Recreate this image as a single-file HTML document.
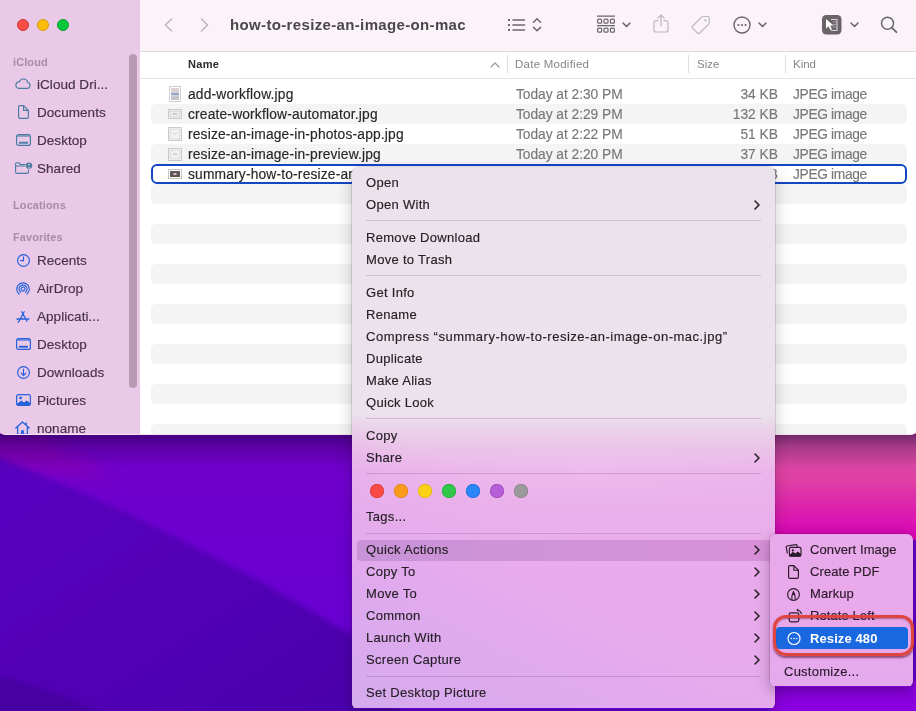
<!DOCTYPE html><html><head><meta charset="utf-8"><style>

*{margin:0;padding:0;box-sizing:border-box}
html,body{width:916px;height:711px;overflow:hidden}
body{position:relative;font-family:"Liberation Sans",sans-serif;background:#5a00b8}
#win,#menu,#sub,#wall{will-change:transform}
.abs{position:absolute}
svg{position:absolute;overflow:visible}
#wall{position:absolute;left:0;top:0;width:916px;height:711px;overflow:hidden;background:#5000b0}
#win{position:absolute;left:-4px;top:-4px;width:924px;height:439px;border-radius:10px;overflow:hidden;background:#fff}
#side{position:absolute;left:0;top:0;width:140px;height:434px;background:#e9c9e7;box-shadow:-4px -4px 0 0 #e9c9e7,0 -4px 0 0 #e9c9e7,-4px 0 0 0 #e9c9e7}
#tool{position:absolute;left:140px;top:-4px;width:780px;height:56px;background:#faf3f8;border-bottom:1px solid #e2dae0}
.tl{position:absolute;top:19px;width:12px;height:12px;border-radius:50%}
.sh{position:absolute;left:13px;font-size:11px;font-weight:bold;color:#a88aa6;letter-spacing:0.1px}
.si{position:absolute;left:37px;font-size:13.5px;color:#46304a;white-space:nowrap;letter-spacing:0.05px;margin-top:1px;-webkit-text-stroke:0.15px #46304a}
.row{position:absolute;left:151px;width:756px;height:20px;border-radius:5px}
.stripe{background:#f4f4f5}
.cell{position:absolute;font-size:13.8px;white-space:nowrap;line-height:20px;top:0.5px}
.nm{left:188px;color:#262626;letter-spacing:0.17px;-webkit-text-stroke:0.15px #262626}
.dt{left:516px;color:#777;letter-spacing:-0.05px;-webkit-text-stroke:0.12px #777}
.sz{right:138px;color:#777;text-align:right;letter-spacing:0px;-webkit-text-stroke:0.12px #777}
.kd{left:793px;color:#777;letter-spacing:-0.35px;-webkit-text-stroke:0.12px #777}
#menu{position:absolute;left:352px;top:167px;width:423px;height:542px;border-radius:6px;overflow:hidden;
 box-shadow:0 0 0 0.5px rgba(60,0,60,0.25),0 6px 16px rgba(0,0,0,0.22)}
.mbg{position:absolute;left:0;top:0;width:423px;height:541px}
.mi{position:absolute;left:14px;font-size:13px;color:#272027;white-space:nowrap;line-height:22px;height:22px;letter-spacing:0.3px;-webkit-text-stroke:0.15px currentColor}
.sep{position:absolute;left:14px;width:395px;height:1px;background:rgba(80,40,80,0.18)}
#sub{position:absolute;left:770px;top:534px;width:143px;height:153px;border-radius:6px;overflow:hidden;
 box-shadow:0 0 0 0.5px rgba(60,0,60,0.25),0 4px 14px rgba(0,0,0,0.3)}
.tag{position:absolute;top:317px;width:14px;height:14px;border-radius:50%}

</style></head><body>
<div id="wall">
<div class="abs" style="left:0;top:0;width:916px;height:711px;background:linear-gradient(180deg,#6800c0 0%,#6c00c8 60%,#7200cc 100%)"></div>
<svg style="left:0;top:0" width="916" height="711" viewBox="0 0 916 711">
<defs>
<linearGradient id="wg1" x1="0" y1="0" x2="0" y2="1"><stop offset="0" stop-color="#7200c8"/><stop offset="0.4" stop-color="#6c00d0"/><stop offset="1" stop-color="#6600d6"/></linearGradient>
<linearGradient id="wg2" x1="0" y1="0" x2="1" y2="1"><stop offset="0" stop-color="#5a00c0"/><stop offset="1" stop-color="#4a00aa"/></linearGradient>
<linearGradient id="wmag" x1="0" y1="0" x2="0" y2="1"><stop offset="0" stop-color="#cc50a0"/><stop offset="0.45" stop-color="#e040a4"/><stop offset="1" stop-color="#d800b8"/></linearGradient>
<filter id="bl" x="-20%" y="-20%" width="140%" height="140%"><feGaussianBlur stdDeviation="2.5"/></filter><filter id="bl2" x="-50%" y="-50%" width="200%" height="200%"><feGaussianBlur stdDeviation="8"/></filter>
</defs>
<rect x="0" y="430" width="916" height="281" fill="url(#wg1)"/>
<path d="M-10 435 L40 435 L120 480 L-10 470 Z" fill="#8400b8" filter="url(#bl2)" opacity="0.8"/>
<path d="M-20 450 C120 505 250 570 400 665 L400 730 L-20 730 Z" fill="url(#wg2)" filter="url(#bl)"/>
<path d="M-20 672 Q60 688 110 720 L-20 720 Z" fill="#4600a2" filter="url(#bl)"/>
<rect x="770" y="430" width="146" height="110" fill="url(#wmag)"/>
<rect x="770" y="680" width="146" height="31" fill="#8a00e0"/>
</svg>
<div class="abs" style="left:0;top:434px;width:916px;height:34px;background:linear-gradient(180deg,rgba(20,0,50,0.5),rgba(20,0,50,0.22) 40%,rgba(20,0,50,0))"></div>
</div>
<div id="win"><div class="abs" style="left:4px;top:4px;width:920px;height:435px"><div id="side">
<div class="tl" style="left:17px;background:#fe4d45;border:0.8px solid #c9352f"></div><div class="tl" style="left:37px;background:#fdbb0a;border:0.8px solid #d69c0a"></div><div class="tl" style="left:57px;background:#06c83a;border:0.8px solid #0c9e2c"></div>
<div class="sh" style="top:55.5px">iCloud</div><div class="sh" style="top:199px">Locations</div><div class="sh" style="top:231px">Favorites</div>
<div class="si" style="top:76px">iCloud Dri...</div>
<div class="si" style="top:104px">Documents</div>
<div class="si" style="top:132px">Desktop</div>
<div class="si" style="top:160px">Shared</div>
<div class="si" style="top:252px">Recents</div>
<div class="si" style="top:280px">AirDrop</div>
<div class="si" style="top:308px">Applicati...</div>
<div class="si" style="top:336px">Desktop</div>
<div class="si" style="top:364px">Downloads</div>
<div class="si" style="top:392px">Pictures</div>
<div class="si" style="top:420px">noname</div>

<svg style="left:15px;top:78px" width="16" height="11" viewBox="0 0 16 11"><path d="M4 10.4 H12.2 A3 3 0 0 0 12.8 4.5 A4.4 4.4 0 0 0 4.4 3.8 A3.3 3.3 0 0 0 4 10.4 Z" fill="none" stroke="#4a7ca2" stroke-width="1.15"/></svg>
<svg style="left:18px;top:105px" width="11" height="14" viewBox="0 0 11 14"><path d="M2 0.6 H5.6 L10.4 5.4 V12 Q10.4 13.4 9 13.4 H2 Q0.6 13.4 0.6 12 V2 Q0.6 0.6 2 0.6 Z M5.6 0.8 V5.4 H10.2" fill="none" stroke="#4a7ca2" stroke-width="1.15" stroke-linejoin="round"/></svg>
<svg style="left:16px;top:134px" width="15" height="12" viewBox="0 0 15 12"><rect x="0.6" y="0.6" width="13.8" height="10.8" rx="2" fill="none" stroke="#4a7ca2" stroke-width="1.15"/><rect x="1" y="1" width="13" height="2" fill="#4a7ca2" opacity="0.55"/><rect x="3" y="7.8" width="9" height="1.9" fill="#4a7ca2"/></svg>
<svg style="left:15px;top:162px" width="18" height="12" viewBox="0 0 18 12"><path d="M10.5 2.5 H5.5 L4 0.8 H1.8 Q0.6 0.8 0.6 2 V10 Q0.6 11.4 2 11.4 H12 Q13.4 11.4 13.4 10 V7.5 M0.6 4 H10" fill="none" stroke="#4a7ca2" stroke-width="1.1"/><circle cx="14" cy="3.6" r="3.2" fill="#4a7ca2"/><circle cx="14" cy="2.6" r="0.9" fill="#e9c9e7"/><path d="M12.4 5.6 Q14 3.8 15.6 5.6" fill="#e9c9e7"/></svg>
<svg style="left:17px;top:254px" width="13" height="13" viewBox="0 0 13 13"><circle cx="6.5" cy="6.5" r="5.9" fill="none" stroke="#2562dc" stroke-width="1.2"/><path d="M6.5 2.8 V6.6 H3.6" fill="none" stroke="#2562dc" stroke-width="1.2" stroke-linecap="round"/></svg>
<svg style="left:16px;top:282px" width="14" height="14" viewBox="0 0 14 14"><path d="M3.2 12.2 A6.3 6.3 0 1 1 10.8 12.2 M4.6 10.3 A4 4 0 1 1 9.4 10.3 M5.9 8.4 A1.9 1.9 0 1 1 8.1 8.4" fill="none" stroke="#2562dc" stroke-width="1.15" stroke-linecap="round"/><path d="M5.6 9.6 L7 7.6 L8.4 9.6 Z" fill="#2562dc"/></svg>
<svg style="left:16px;top:311px" width="14" height="12" viewBox="0 0 14 12"><path d="M8.2 0.8 L3 10.2 M5.8 0.8 L11 10.2 M1 8 H13 M2.2 11.2 L2.6 10.4" fill="none" stroke="#2562dc" stroke-width="1.3" stroke-linecap="round"/></svg>
<svg style="left:16px;top:338px" width="15" height="12" viewBox="0 0 15 12"><rect x="0.6" y="0.6" width="13.8" height="10.8" rx="2" fill="none" stroke="#2562dc" stroke-width="1.2"/><rect x="1" y="1" width="13" height="2" fill="#2562dc" opacity="0.55"/><rect x="3" y="7.8" width="9" height="1.9" fill="#2562dc"/></svg>
<svg style="left:17px;top:366px" width="13" height="13" viewBox="0 0 13 13"><circle cx="6.5" cy="6.5" r="5.9" fill="none" stroke="#2562dc" stroke-width="1.2"/><path d="M6.5 3.2 V9.4 M4.2 7.2 L6.5 9.5 L8.8 7.2" fill="none" stroke="#2562dc" stroke-width="1.2" stroke-linecap="round" stroke-linejoin="round"/></svg>
<svg style="left:16px;top:394px" width="15" height="12" viewBox="0 0 15 12"><rect x="0.6" y="0.6" width="13.8" height="10.8" rx="1.8" fill="none" stroke="#2562dc" stroke-width="1.2"/><circle cx="4.6" cy="3.9" r="1.4" fill="#2562dc"/><path d="M0.8 10 L5.2 6.6 L8 8.6 L10.5 6.4 L14.2 9 V11.4 H0.8 Z" fill="#2562dc"/></svg>
<svg style="left:15px;top:421px" width="15" height="14" viewBox="0 0 15 14"><path d="M0.8 7 L7.5 0.9 L14.2 7 M2.6 5.6 V13.4 H12.4 V5.6 M11.2 2 V4.3" fill="none" stroke="#2562dc" stroke-width="1.3" stroke-linecap="round" stroke-linejoin="round"/><rect x="6.1" y="9.2" width="2.8" height="4.4" fill="#2562dc"/></svg>

<div class="abs" style="left:129px;top:54px;width:8px;height:334px;border-radius:4px;background:#b99ab3"></div>
</div>
<div id="tool"><div class="abs" style="left:90px;top:20px;font-size:15px;font-weight:bold;color:#4b4649;letter-spacing:0.35px;white-space:nowrap">how-to-resize-an-image-on-mac</div></div>

<svg style="left:164px;top:18px" width="9" height="14" viewBox="0 0 9 14"><path d="M7.6 1 L1.4 7 L7.6 13" fill="none" stroke="#bab5b9" stroke-width="1.35" stroke-linecap="round" stroke-linejoin="round"/></svg>
<svg style="left:200px;top:18px" width="9" height="14" viewBox="0 0 9 14"><path d="M1.4 1 L7.6 7 L1.4 13" fill="none" stroke="#bab5b9" stroke-width="1.35" stroke-linecap="round" stroke-linejoin="round"/></svg>
<svg style="left:507px;top:18px" width="19" height="14" viewBox="0 0 19 14"><g fill="#6c676b"><rect x="1" y="1" width="2" height="2"/><rect x="1" y="6" width="2" height="2"/><rect x="1" y="11" width="2" height="2"/></g><path d="M6 2 H17.5 M6 7 H17.5 M6 12 H17.5" stroke="#6c676b" stroke-width="1.6" stroke-linecap="round"/></svg>
<svg style="left:532px;top:17px" width="10" height="16" viewBox="0 0 10 16"><path d="M1.5 5.2 L5 1.8 L8.5 5.2 M1.5 10.4 L5 13.8 L8.5 10.4" fill="none" stroke="#6c676b" stroke-width="1.5" stroke-linecap="round" stroke-linejoin="round"/></svg>
<svg style="left:596px;top:15px" width="20" height="19" viewBox="0 0 20 19"><path d="M1 1.2 H19 M1 10.6 H19" stroke="#6c676b" stroke-width="1.2"/><g fill="none" stroke="#6c676b" stroke-width="1.2"><rect x="1.6" y="4.2" width="4" height="4" rx="1"/><rect x="8" y="4.2" width="4" height="4" rx="1"/><rect x="14.4" y="4.2" width="4" height="4" rx="1"/><rect x="1.6" y="13.2" width="4" height="4" rx="1"/><rect x="8" y="13.2" width="4" height="4" rx="1"/><rect x="14.4" y="13.2" width="4" height="4" rx="1"/></g></svg>
<svg style="left:622px;top:22px" width="9" height="6" viewBox="0 0 9 6"><path d="M1 1 L4.5 4.6 L8 1" fill="none" stroke="#6c676b" stroke-width="1.5" stroke-linecap="round" stroke-linejoin="round"/></svg>
<svg style="left:653px;top:14px" width="16" height="19" viewBox="0 0 16 19"><path d="M5 6.6 H3 Q1 6.6 1 8.6 V16 Q1 18 3 18 H13 Q15 18 15 16 V8.6 Q15 6.6 13 6.6 H11 M8 12 V1.2 M4.8 4.2 L8 1 L11.2 4.2" fill="none" stroke="#bdb8bc" stroke-width="1.2" stroke-linecap="round" stroke-linejoin="round"/></svg>
<svg style="left:690px;top:15px" width="21" height="20" viewBox="0 0 21 20"><path d="M13.2 1.5 H17.5 Q19.3 1.5 19.3 3.3 V7.6 Q19.3 8.5 18.6 9.2 L9.8 18 Q8.6 19.2 7.4 18 L2.8 13.4 Q1.6 12.2 2.8 11 L11.6 2.2 Q12.3 1.5 13.2 1.5 Z" fill="none" stroke="#bdb8bc" stroke-width="1.2"/><circle cx="15.4" cy="5.4" r="1.1" fill="#bdb8bc"/></svg>
<svg style="left:733px;top:16px" width="18" height="18" viewBox="0 0 18 18"><circle cx="9" cy="9" r="8" fill="none" stroke="#6c676b" stroke-width="1.4"/><circle cx="5.4" cy="9" r="1.1" fill="#6c676b"/><circle cx="9" cy="9" r="1.1" fill="#6c676b"/><circle cx="12.6" cy="9" r="1.1" fill="#6c676b"/></svg>
<svg style="left:758px;top:22px" width="9" height="6" viewBox="0 0 9 6"><path d="M1 1 L4.5 4.6 L8 1" fill="none" stroke="#6c676b" stroke-width="1.5" stroke-linecap="round" stroke-linejoin="round"/></svg>
<svg style="left:822px;top:15px" width="20" height="20" viewBox="0 0 20 20"><rect x="0" y="0" width="19.5" height="19.5" rx="4.2" fill="#6a6468"/><path d="M9 4.5 H15 V15.5 H9" fill="none" stroke="#d8d4d8" stroke-width="1.1"/><path d="M11 7 H14 M11 9.5 H14 M11 12 H14" stroke="#a8a2a6" stroke-width="1"/><path d="M4 4 L4 13.5 L6.5 11.2 L8.3 15 L10 14.2 L8.3 10.6 L11.6 10.6 Z" fill="#fff"/></svg>
<svg style="left:850px;top:22px" width="9" height="6" viewBox="0 0 9 6"><path d="M1 1 L4.5 4.6 L8 1" fill="none" stroke="#6c676b" stroke-width="1.5" stroke-linecap="round" stroke-linejoin="round"/></svg>
<svg style="left:880px;top:16px" width="18" height="18" viewBox="0 0 18 18"><circle cx="7.5" cy="7.3" r="6" fill="none" stroke="#6c676b" stroke-width="1.5"/><path d="M11.8 11.6 L16.4 16.2" stroke="#6c676b" stroke-width="1.8" stroke-linecap="round"/></svg>

<div class="abs" style="left:140px;top:52px;width:776px;height:27px;border-bottom:1px solid #e4e4e4"></div>
<div class="abs" style="left:188px;top:58px;font-size:11px;font-weight:bold;color:#2b2b2b;letter-spacing:0.3px">Name</div>
<svg style="left:490px;top:62px" width="10" height="6" viewBox="0 0 10 6"><path d="M1 5 L5 1 L9 5" fill="none" stroke="#9a9a9a" stroke-width="1.2" stroke-linecap="round" stroke-linejoin="round"/></svg>
<div class="abs" style="left:515px;top:58px;font-size:11.5px;color:#858585;letter-spacing:0.25px">Date Modified</div>
<div class="abs" style="left:697px;top:58px;font-size:11.5px;color:#858585">Size</div>
<div class="abs" style="left:793px;top:58px;font-size:11.5px;color:#858585">Kind</div>
<div class="abs" style="left:507px;top:55px;width:1px;height:18px;background:#e0e0e0"></div>
<div class="abs" style="left:688px;top:55px;width:1px;height:18px;background:#e0e0e0"></div>
<div class="abs" style="left:785px;top:55px;width:1px;height:18px;background:#e0e0e0"></div>
<div class="row stripe" style="top:104px"></div>
<div class="row stripe" style="top:144px"></div>
<div class="row stripe" style="top:184px"></div>
<div class="row stripe" style="top:224px"></div>
<div class="row stripe" style="top:264px"></div>
<div class="row stripe" style="top:304px"></div>
<div class="row stripe" style="top:344px"></div>
<div class="row stripe" style="top:384px"></div>
<div class="row stripe" style="top:424px"></div>
<div class="row" style="top:164px;height:20px;border:2px solid #1446c4;border-radius:6px"></div>
<div class="abs" style="left:0;top:84px;width:916px;height:20px"><div class="cell nm">add-workflow.jpg</div><div class="cell dt">Today at 2:30 PM</div><div class="cell sz">34 KB</div><div class="cell kd">JPEG image</div></div>
<div class="abs" style="left:0;top:104px;width:916px;height:20px"><div class="cell nm">create-workflow-automator.jpg</div><div class="cell dt">Today at 2:29 PM</div><div class="cell sz">132 KB</div><div class="cell kd">JPEG image</div></div>
<div class="abs" style="left:0;top:124px;width:916px;height:20px"><div class="cell nm">resize-an-image-in-photos-app.jpg</div><div class="cell dt">Today at 2:22 PM</div><div class="cell sz">51 KB</div><div class="cell kd">JPEG image</div></div>
<div class="abs" style="left:0;top:144px;width:916px;height:20px"><div class="cell nm">resize-an-image-in-preview.jpg</div><div class="cell dt">Today at 2:20 PM</div><div class="cell sz">37 KB</div><div class="cell kd">JPEG image</div></div>
<div class="abs" style="left:0;top:164px;width:916px;height:20px"><div class="cell nm">summary-how-to-resize-an-image-on-mac.jpg</div><div class="cell dt">Today at 2:18 PM</div><div class="cell sz">88 KB</div><div class="cell kd">JPEG image</div></div>

<svg style="left:169px;top:86px" width="12" height="17" viewBox="0 0 12 17"><rect x="0.5" y="1" width="11" height="15" fill="#000" opacity="0.08"/><rect x="0.5" y="0.5" width="11" height="15" fill="#fff" stroke="#cfcfcf" stroke-width="1"/><rect x="2" y="2" width="8" height="12" fill="#d6d0da"/><rect x="2" y="2" width="8" height="3.5" fill="#dccfd6"/><rect x="2" y="7" width="8" height="2" fill="#93a6cc"/><rect x="2" y="10.5" width="8" height="3.5" fill="#c6c2cc"/></svg>
<svg style="left:168px;top:109px" width="14" height="11" viewBox="0 0 14 11"><rect x="0.5" y="1" width="13" height="9" fill="#000" opacity="0.08"/><rect x="0.5" y="0.5" width="13" height="9" fill="#fff" stroke="#cacaca" stroke-width="1"/><rect x="2" y="2" width="10" height="6" fill="#efefef" stroke="#c4c4c4" stroke-width="0.8"/><rect x="4.5" y="4.2" width="5" height="1.4" fill="#c0c0c0"/></svg>
<svg style="left:168px;top:127px" width="14" height="15" viewBox="0 0 14 15"><rect x="0.5" y="1" width="13" height="13" fill="#000" opacity="0.08"/><rect x="0.5" y="0.5" width="13" height="13" fill="#fff" stroke="#cacaca" stroke-width="1"/><rect x="2" y="2" width="10" height="10" fill="#f2f2f2" stroke="#d0d0d0" stroke-width="0.8"/><path d="M4 4.5 L7 7.5 L10 5" stroke="#cdcdcd" stroke-width="0.9" fill="none"/></svg>
<svg style="left:168px;top:148px" width="14" height="14" viewBox="0 0 14 14"><rect x="0.5" y="1" width="13" height="12" fill="#000" opacity="0.08"/><rect x="0.5" y="0.5" width="13" height="12" fill="#fff" stroke="#cacaca" stroke-width="1"/><rect x="2" y="2" width="10" height="9" fill="#f0f0f0" stroke="#d0d0d0" stroke-width="0.8"/><rect x="5" y="5.5" width="4" height="1.2" fill="#c4c4c4"/></svg>
<svg style="left:168px;top:169px" width="14" height="11" viewBox="0 0 14 11"><rect x="0.5" y="1" width="13" height="9" fill="#000" opacity="0.08"/><rect x="0.5" y="0.5" width="13" height="9" fill="#fff" stroke="#c4c4c4" stroke-width="1"/><rect x="2" y="2" width="10" height="6" fill="#5e585a"/><rect x="5.5" y="4" width="3" height="2" fill="#d8c0c8"/></svg>

<div class="abs" style="left:-4px;top:434px;width:924px;height:1px;background:#f4e4f2"></div>
</div></div>
<div id="menu">
<svg class="mbg" style="left:0;top:0" width="423" height="541" viewBox="0 0 423 541">
<defs>
<linearGradient id="mg" x1="0" y1="0" x2="0" y2="1">
<stop offset="0" stop-color="#ebe3eb"/><stop offset="0.455" stop-color="#ebe2eb"/><stop offset="0.5" stop-color="#eacbe8"/><stop offset="0.56" stop-color="#eab4ea"/><stop offset="0.75" stop-color="#eaaaec"/><stop offset="1" stop-color="#e6aaec"/>
</linearGradient>
<linearGradient id="mdiag" gradientUnits="userSpaceOnUse" x1="0" y1="541" x2="130" y2="320">
<stop offset="0" stop-color="#d4aaee" stop-opacity="1"/><stop offset="0.55" stop-color="#dcaaee" stop-opacity="0.6"/><stop offset="1" stop-color="#e8aaee" stop-opacity="0"/>
</linearGradient>
<radialGradient id="mhl" cx="0.5" cy="0.5" r="0.5"><stop offset="0" stop-color="#f4c8f2" stop-opacity="0.55"/><stop offset="1" stop-color="#f4c8f2" stop-opacity="0"/></radialGradient>
</defs>
<rect width="423" height="541" fill="url(#mg)"/>
<rect x="0" y="0" width="423" height="541" fill="url(#mdiag)"/>
<ellipse cx="240" cy="300" rx="220" ry="40" fill="url(#mhl)" opacity="0.6"/>
</svg>
<div class="mi" style="top:5px">Open</div>
<div class="mi" style="top:27px">Open With</div>
<svg style="left:402px;top:33px" width="6" height="10" viewBox="0 0 6 10"><path d="M1 1 L5 5 L1 9" fill="none" stroke="#2a2229" stroke-width="1.6" stroke-linecap="round" stroke-linejoin="round"/></svg>
<div class="sep" style="top:53px"></div>
<div class="mi" style="top:60px">Remove Download</div>
<div class="mi" style="top:82px">Move to Trash</div>
<div class="sep" style="top:108px"></div>
<div class="mi" style="top:115px">Get Info</div>
<div class="mi" style="top:137px">Rename</div>
<div class="mi" style="top:159px"><span style="letter-spacing:0.52px">Compress “summary-how-to-resize-an-image-on-mac.jpg”</span></div>
<div class="mi" style="top:181px">Duplicate</div>
<div class="mi" style="top:203px">Make Alias</div>
<div class="mi" style="top:225px">Quick Look</div>
<div class="sep" style="top:251px"></div>
<div class="mi" style="top:258px">Copy</div>
<div class="mi" style="top:280px">Share</div>
<svg style="left:402px;top:286px" width="6" height="10" viewBox="0 0 6 10"><path d="M1 1 L5 5 L1 9" fill="none" stroke="#2a2229" stroke-width="1.6" stroke-linecap="round" stroke-linejoin="round"/></svg>
<div class="sep" style="top:306px"></div>
<div class="mi" style="top:339px">Tags...</div>
<div class="sep" style="top:366px"></div>
<div class="abs" style="left:5px;top:372.5px;width:420px;height:21px;border-radius:4px;background:linear-gradient(90deg,#c893d8,#d991d8)"></div>
<div class="mi" style="top:372px">Quick Actions</div>
<svg style="left:402px;top:378px" width="6" height="10" viewBox="0 0 6 10"><path d="M1 1 L5 5 L1 9" fill="none" stroke="#2a2229" stroke-width="1.6" stroke-linecap="round" stroke-linejoin="round"/></svg>
<div class="mi" style="top:394px">Copy To</div>
<svg style="left:402px;top:400px" width="6" height="10" viewBox="0 0 6 10"><path d="M1 1 L5 5 L1 9" fill="none" stroke="#2a2229" stroke-width="1.6" stroke-linecap="round" stroke-linejoin="round"/></svg>
<div class="mi" style="top:416px">Move To</div>
<svg style="left:402px;top:422px" width="6" height="10" viewBox="0 0 6 10"><path d="M1 1 L5 5 L1 9" fill="none" stroke="#2a2229" stroke-width="1.6" stroke-linecap="round" stroke-linejoin="round"/></svg>
<div class="mi" style="top:438px">Common</div>
<svg style="left:402px;top:444px" width="6" height="10" viewBox="0 0 6 10"><path d="M1 1 L5 5 L1 9" fill="none" stroke="#2a2229" stroke-width="1.6" stroke-linecap="round" stroke-linejoin="round"/></svg>
<div class="mi" style="top:460px">Launch With</div>
<svg style="left:402px;top:466px" width="6" height="10" viewBox="0 0 6 10"><path d="M1 1 L5 5 L1 9" fill="none" stroke="#2a2229" stroke-width="1.6" stroke-linecap="round" stroke-linejoin="round"/></svg>
<div class="mi" style="top:482px">Screen Capture</div>
<svg style="left:402px;top:488px" width="6" height="10" viewBox="0 0 6 10"><path d="M1 1 L5 5 L1 9" fill="none" stroke="#2a2229" stroke-width="1.6" stroke-linecap="round" stroke-linejoin="round"/></svg>
<div class="sep" style="top:509px"></div>
<div class="mi" style="top:515px">Set Desktop Picture</div>
<div class="tag" style="left:18px;background:#f94a45;box-shadow:inset 0 0 0 0.7px #d83a36"></div>
<div class="tag" style="left:42px;background:#fa9b1c;box-shadow:inset 0 0 0 0.7px #dd8412"></div>
<div class="tag" style="left:66px;background:#fbd017;box-shadow:inset 0 0 0 0.7px #dcb40f"></div>
<div class="tag" style="left:90px;background:#2fc84a;box-shadow:inset 0 0 0 0.7px #24a83c"></div>
<div class="tag" style="left:114px;background:#2b86f8;box-shadow:inset 0 0 0 0.7px #1f6ed8"></div>
<div class="tag" style="left:138px;background:#b65ed8;box-shadow:inset 0 0 0 0.7px #9a48bd"></div>
<div class="tag" style="left:162px;background:#9b9b9d;box-shadow:inset 0 0 0 0.7px #838385"></div>
</div>
<div id="sub">
<div class="abs" style="left:0;top:0;width:143px;height:152px;background:linear-gradient(180deg,#e8aaea,#e9a8ea 60%,#e4aaee)"></div>
<div class="mi" style="left:40px;top:5px;color:#2a1a2a;letter-spacing:0.1px">Convert Image</div>
<div class="mi" style="left:40px;top:27px;color:#2a1a2a;letter-spacing:0.1px">Create PDF</div>
<div class="mi" style="left:40px;top:49px;color:#2a1a2a;letter-spacing:0.1px">Markup</div>
<div class="mi" style="left:40px;top:71px;color:#2a1a2a;letter-spacing:0.1px">Rotate Left</div>

<svg style="left:15px;top:10px" width="17" height="14" viewBox="0 0 17 14"><path d="M2.4 9.4 L1.2 3.2 Q1 2.2 2 2 L10.8 0.6 Q11.8 0.4 12 1.4 L12.3 3.1" fill="none" stroke="#2a1a2a" stroke-width="1.15"/><rect x="4.4" y="3.4" width="11.6" height="8.8" rx="1.4" fill="none" stroke="#2a1a2a" stroke-width="1.15"/><circle cx="7.8" cy="6.4" r="1.1" fill="#2a1a2a"/><path d="M4.4 11 L8 7.8 L10.4 9.4 L12.6 7.4 L16 10 V12.4 H4.4 Z" fill="#2a1a2a"/></svg>
<svg style="left:17.5px;top:31px" width="12" height="14" viewBox="0 0 12 14"><path d="M1.9 0.6 H5.9 L10.4 5.1 V11.9 Q10.4 13.3 9 13.3 H1.9 Q0.6 13.3 0.6 11.9 V2 Q0.6 0.6 1.9 0.6 Z M5.9 0.8 V5.2 H10.2" fill="none" stroke="#2a1a2a" stroke-width="1.15" stroke-linejoin="round"/></svg>
<svg style="left:17px;top:54px" width="13" height="13" viewBox="0 0 13 13"><circle cx="6.5" cy="6.5" r="5.9" fill="none" stroke="#2a1a2a" stroke-width="1.15"/><path d="M4.9 11.8 V8 L6.5 3.4 L8.1 8 V11.8" fill="none" stroke="#2a1a2a" stroke-width="1.05" stroke-linejoin="round"/><path d="M5.4 7 L6.5 3.6 L7.6 7 Z" fill="#2a1a2a"/></svg>
<svg style="left:18px;top:75px" width="15" height="14" viewBox="0 0 15 14"><rect x="1.2" y="3.8" width="9.6" height="9" rx="1.8" fill="none" stroke="#2a1a2a" stroke-width="1.15"/><path d="M9.4 1.2 Q12.6 1.6 13.4 4.6" fill="none" stroke="#2a1a2a" stroke-width="1.1" stroke-linecap="round"/><path d="M8.2 1.1 L10.4 -0.4 L10.2 2.6 Z" fill="#2a1a2a"/></svg>

<div class="abs" style="left:6px;top:93px;width:132px;height:22px;border-radius:4px;background:#1968df"></div>
<svg style="left:17px;top:98px" width="14" height="14" viewBox="0 0 14 14"><circle cx="7" cy="6.5" r="6" fill="none" stroke="#fff" stroke-width="1.2"/><circle cx="4.3" cy="6.5" r="0.8" fill="#fff"/><circle cx="7" cy="6.5" r="0.8" fill="#fff"/><circle cx="9.7" cy="6.5" r="0.8" fill="#fff"/></svg>
<div class="mi" style="left:40px;top:94px;color:#fff;font-weight:bold;font-size:13px;letter-spacing:0.1px;-webkit-text-stroke:0">Resize 480</div>
<div class="mi" style="left:14px;top:127px;color:#2a1a2a;letter-spacing:0.25px">Customize...</div>
</div>
<div class="abs" style="left:773px;top:615px;width:141px;height:41px;border:3.6px solid #e0443f;border-radius:13px;box-shadow:0 1.5px 2px rgba(70,0,30,0.55),inset 0 1px 1.5px rgba(70,0,30,0.4)"></div>
</body></html>
